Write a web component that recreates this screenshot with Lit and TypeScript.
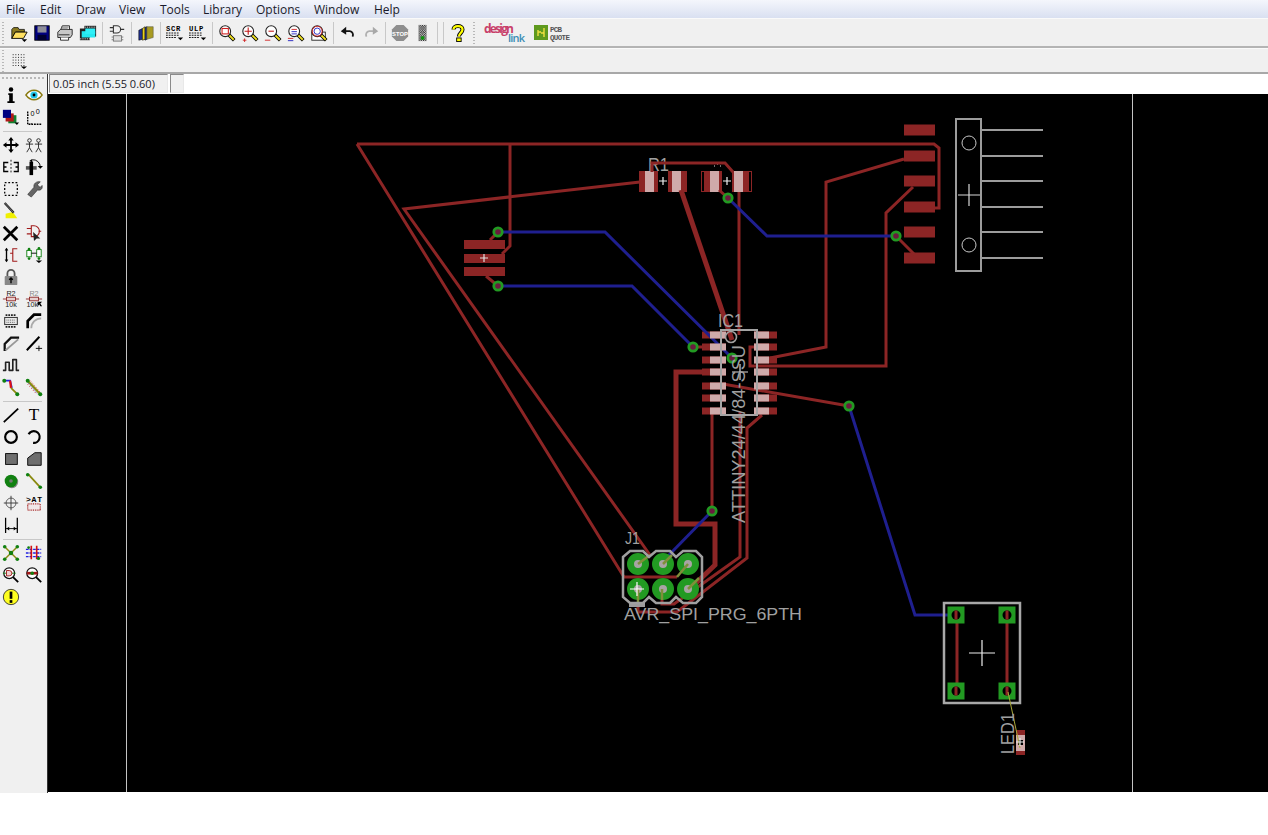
import { html, svg, css, LitElement, TemplateResult } from 'lit';
import { customElement } from 'lit/decorators.js';

const RED = '#8c2525';
const BLUE = '#1f1f8f';
const GREEN = '#229a22';
const GREY = '#a0a0a0';
const LEAD = '#cfaaaa';

const MENUS = ['File', 'Edit', 'Draw', 'View', 'Tools', 'Library', 'Options', 'Window', 'Help'];

function ico(content: unknown): TemplateResult {
  return html`<svg class="ico" viewBox="0 0 20 20" width="18" height="18">${content}</svg>`;
}

function glass(inner: unknown = svg``) {
  return svg`
    <line x1="12" y1="12" x2="18" y2="18" stroke="#000" stroke-width="4"/>
    <line x1="12.5" y1="12.5" x2="17.5" y2="17.5" stroke="#f0e020" stroke-width="2"/>
    <circle cx="8" cy="8" r="6" fill="#fff" stroke="#222" stroke-width="1.2"/>
    ${inner}`;
}

function scriptIcon(label: string) {
  return svg`
    <text x="0" y="8" font-family="Liberation Mono" font-size="8" font-weight="700" fill="#000" textLength="16">${label}</text>
    <path d="M0 10h15M0 12.500h15M0 15h11" stroke="#000" stroke-dasharray="2 1" fill="none"/>
    <path d="M13 15h6l-3 3z" fill="#000"/>`;
}

function nameIcon(fill: string, arrow: boolean) {
  return svg`
    <text x="10" y="7" text-anchor="middle" font-family="Liberation Sans" font-size="8" fill=${fill}>R2</text>
    <path d="M1 10h4M15 10h4" stroke=${RED}/><rect x="5" y="8" width="10" height="4" fill="#e8d0d0" stroke=${RED}/>
    <text x="${arrow ? 8 : 10}" y="18.500" text-anchor="middle" font-family="Liberation Sans" font-size="8" fill="#222">10k</text>
    ${arrow ? svg`<path d="M14 13l5 0-2 2 2 3-2 0-1-2-2 2z" fill="#000"/>` : ''}`;
}

const ICONS: Record<string, TemplateResult> = {
  open: ico(svg`<path d="M2 6l2-2h5l1 2h6v3H6l-4 7z" fill="#8a7a20" stroke="#000" stroke-width=".8"/><path d="M2 16l4-7h13l-4 7z" fill="#ffe060" stroke="#000"/><path d="M13 17h6l-3 3z" fill="#000"/>`),
  save: ico(svg`<rect x="2" y="2" width="16" height="16" fill="#000080" stroke="#000"/><rect x="5" y="2.500" width="10" height="7" fill="#8e8e98"/><rect x="5" y="12" width="10" height="6" fill="#000030"/>`),
  print: ico(svg`<path d="M5 7l2-5h8v5z" fill="#fff" stroke="#222"/><path d="M2 9l3-3h13v6l-2 3H2z" fill="#c8c8c8" stroke="#222"/><path d="M3 12h12M5 15v3h9v-3" stroke="#222" fill="#fff"/><path d="M6 3.500h8M6 5.500h7" stroke="#666"/>`),
  film: ico(svg`<rect x="1" y="5" width="11" height="13" fill="#222"/><rect x="6" y="2" width="13" height="12" fill="#222"/><rect x="3" y="8" width="15" height="7" fill="#24e8f0"/><rect x="7" y="5" width="11" height="6" fill="#30f0f8"/><path d="M1 16.500h11M7 3.500h11" stroke="#fff" stroke-dasharray="1 1"/>`),
  gates: ico(svg`<path d="M6 2h4a4 4 0 0 1 0 8H6zM2 4h4M2 8h4M14 6h4" fill="none" stroke="#333" stroke-width="1.200"/><rect x="6" y="13" width="9" height="6" fill="#ddd" stroke="#777"/><path d="M4 14.500h2M4 17.500h2M15 14.500h2M15 17.500h2" stroke="#777"/>`),
  books: ico(svg`<path d="M2 7l4-2v12l-4 1z" fill="#203090" stroke="#000" stroke-width=".6"/><path d="M6 5l3-2v14l-3 1z" fill="#e8d020" stroke="#000" stroke-width=".6"/><path d="M9 4l2-1v14l-2 1z" fill="#203090" stroke="#000" stroke-width=".6"/><path d="M11 3l7 0v12l-7 2z" fill="#a89a20" stroke="#554" stroke-width=".6"/>`),
  scr: ico(scriptIcon('SCR')),
  ulp: ico(scriptIcon('ULP')),
  zfit: ico(glass(svg`<rect x="4.500" y="5" width="7" height="6" fill="none" stroke="#d02020" stroke-width="1.200"/>`)),
  zin: ico(glass(svg`<path d="M4 8h8M8 4v8" stroke="#c01818" stroke-width="1.200"/><path d="M2 18h4M4 16v4" stroke="#d02020"/>`)),
  zout: ico(glass(svg`<path d="M5 8h6" stroke="#c01818" stroke-width="1.200"/><path d="M1 18h6" stroke="#d02020"/>`)),
  zsel: ico(glass(svg`<path d="M5 6h6" stroke="#d02020"/><path d="M5 8.500h6M5 11h6" stroke="#2020c0"/><path d="M1 16h6" stroke="#d02020"/><path d="M1 18.500h6" stroke="#2020c0"/>`)),
  zarea: ico(svg`<rect x="2" y="9" width="15" height="9" fill="#fff" stroke="#222"/>${glass(svg`<circle cx="8" cy="8" r="3.500" fill="none" stroke="#2020c0"/><circle cx="8" cy="8" r="5.500" fill="none" stroke="#d02020"/>`)}`),
  undo: ico(svg`<path d="M4 8h8a4 4 0 0 1 3 6" fill="none" stroke="#111" stroke-width="2"/><path d="M8 3v9L2 8z" fill="#111"/>`),
  redo: ico(svg`<path d="M16 8H8a4 4 0 0 0-3 6" fill="none" stroke="#b0b0b0" stroke-width="2"/><path d="M12 3v9l6-4z" fill="#a8a8a8"/>`),
  stop: ico(svg`<path d="M6 1h8l5 5v8l-5 5H6l-5-5V6z" fill="#8e8e8e"/><text x="10" y="13" text-anchor="middle" font-family="Liberation Sans" font-size="6.500" font-weight="700" fill="#fff">STOP</text>`),
  light: ico(svg`<pattern id="chk" width="2" height="2" patternUnits="userSpaceOnUse"><rect width="2" height="2" fill="#fff"/><rect width="1" height="1" fill="#000"/><rect x="1" y="1" width="1" height="1" fill="#000"/></pattern><rect x="5" y="1" width="9" height="18" fill="url(#chk)"/><circle cx="9.500" cy="4.500" r="2" fill="#777"/><circle cx="9.500" cy="10" r="2" fill="#777"/><circle cx="9.500" cy="15.500" r="2.200" fill="#109010"/>`),
  help: ico(svg`<path d="M5 6c0-5 10-5 10 0 0 4-4 4-4 8" fill="none" stroke="#000" stroke-width="4.500"/><path d="M5 6c0-5 10-5 10 0 0 4-4 4-4 8" fill="none" stroke="#ffff00" stroke-width="2.500"/><rect x="8.500" y="15.500" width="5" height="4" fill="#ffff00" stroke="#000"/>`),
  grid: ico(svg`<path d="M3 3h13M3 6h13M3 9h13M3 12h13M3 15h13" stroke="#000" stroke-dasharray="1 2" fill="none"/><path d="M12 16h7l-3.500 3z" fill="#000"/>`),

  info: ico(svg`<circle cx="10" cy="4" r="2.500" fill="#000"/><path d="M7 8h5v9h2v2H6v-2h2v-7H7z" fill="#000"/>`),
  eye: ico(svg`<path d="M1 10c5-7 13-7 18 0-5 7-13 7-18 0z" fill="#fff" stroke="#8a7a10" stroke-width="1.500"/><circle cx="10" cy="10" r="4" fill="#20c8e8"/><circle cx="10" cy="10" r="1.600" fill="#000"/>`),
  layers: ico(svg`<rect x="7" y="8" width="9" height="9" fill="#108030"/><rect x="4" y="6" width="9" height="9" fill="#b01818"/><rect x="1" y="2" width="9" height="9" fill="#000080"/><path d="M14 16h5l-2.500 3z" fill="#000"/>`),
  mark: ico(svg`<path d="M3 4v14h15" fill="none" stroke="#000" stroke-dasharray="2 1" stroke-width="1.500"/><path d="M3 8h1M7 18v-1" stroke="#000"/><text x="6" y="9" font-family="Liberation Sans" font-size="8" fill="#000">0</text><text x="12" y="7" font-family="Liberation Sans" font-size="8" fill="#000">0</text>`),
  move: ico(svg`<path d="M10 1l3 4h-2v4h4V7l4 3-4 3v-2h-4v4h2l-3 4-3-4h2v-4H5v2l-4-3 4-3v2h4V5H7z" fill="#000"/>`),
  copy: ico(svg`<g fill="none" stroke="#222"><circle cx="5" cy="5" r="2"/><path d="M5 7v6M1 9h8M5 13l-3 5M5 13l3 5"/><circle cx="15" cy="5" r="2"/><path d="M15 7v6M11 9h8M15 13l-3 5M15 13l3 5"/></g>`),
  mirror: ico(svg`<path d="M10 2v16" stroke="#000" stroke-dasharray="2 2"/><path d="M7 5H2v10h5M13 5h5v10h-5M2 10h3M15 10h3" fill="none" stroke="#000" stroke-width="1.500"/>`),
  rotate: ico(svg`<path d="M1 11h12" stroke="#555" stroke-width="4"/><path d="M7 4v15" stroke="#000" stroke-width="4"/><path d="M8 2a8 8 0 0 1 9 8" fill="none" stroke="#000"/><path d="M14 9h6l-3 3z" fill="#000"/><path d="M8 1v4l-3-2z" fill="#000"/>`),
  group: ico(svg`<rect x="3" y="3" width="14" height="14" fill="none" stroke="#000" stroke-width="1.400" stroke-dasharray="2 2"/>`),
  wrench: ico(svg`<path d="M17 2l-3 3 1 2 2 1 2-2c1 4-2 6-5 5l-7 8-4-3 7-8c-1-4 3-7 7-6z" fill="#666" stroke="#222" stroke-width=".6"/>`),
  paint: ico(svg`<path d="M4 13l8-2 5 7H4z" fill="#f0f000"/><path d="M3 1l10 11" stroke="#222" stroke-width="2.500"/><path d="M3 1l10 11" stroke="#888" stroke-width=".8"/>`),
  del: ico(svg`<path d="M2 3l15 15M17 3L2 18" stroke="#000" stroke-width="3"/>`),
  gate: ico(svg`<path d="M7 2h3a6 6 0 0 1 0 12H7z M2 5h5M2 11h5M15 8h3" fill="none" stroke="#a01818" stroke-width="1.200"/><path d="M9 9l1 10 3-3 4 0z" fill="#222"/>`),
  pinswap: ico(svg`<path d="M5 3v14" stroke="#000" stroke-width="1.500"/><path d="M3 5l2-3 2 3M3 15l2 3 2-3z" fill="#000"/><path d="M9 8h3V3h5M12 8v9h5" fill="none" stroke="#a01818" stroke-width="1.200"/>`),
  gateswap: ico(svg`<rect x="2" y="5" width="5" height="7" fill="#fff" stroke="#108010"/><rect x="13" y="4" width="5" height="8" fill="#fff" stroke="#108010"/><path d="M7 8h6" stroke="#000"/><circle cx="4.500" cy="3.500" r="1.500" fill="#108010"/><circle cx="15.500" cy="2.500" r="1.500" fill="#108010"/><circle cx="4.500" cy="14" r="1.500" fill="#108010"/><circle cx="15.500" cy="14" r="1.500" fill="#108010"/><path d="M12 16h7l-3.500 3z" fill="#000"/>`),
  lock: ico(svg`<path d="M6 9V6a4 4 0 0 1 8 0v3" fill="none" stroke="#555" stroke-width="2"/><rect x="3" y="9" width="14" height="10" rx="1" fill="#888"/><path d="M10 11v6M8 13l2-2 2 2" stroke="#000" stroke-width="1.500" fill="none"/>`),
  name: ico(nameIcon('#222', false)),
  value: ico(nameIcon('#888', true)),
  smash: ico(svg`<rect x="3" y="6" width="14" height="8" fill="#e8e8e8" stroke="#222"/><path d="M4 3.500h12M4 16.500h12" stroke="#222" stroke-dasharray="2 1" stroke-width="2"/><path d="M5 9h9M5 11.500h9" stroke="#555" stroke-dasharray="1 1"/>`),
  miter: ico(svg`<path d="M3 18V10l7-7h8" fill="none" stroke="#000" stroke-width="3"/><path d="M7 18c0-6 5-11 11-11" fill="none" stroke="#aaa" stroke-width="2"/>`),
  split: ico(svg`<path d="M3 19v-8l7-7h9" fill="none" stroke="#111" stroke-width="2.500"/><path d="M4 18L18 6" stroke="#999" stroke-width="2"/>`),
  optimize: ico(svg`<path d="M2 18L16 3" stroke="#000" stroke-width="2.200"/><path d="M12 16h7M15.500 13v6" stroke="#000"/>`),
  meander: ico(svg`<path d="M1 16h3V7h4v9h4V4h4v12h3" fill="none" stroke="#222" stroke-width="1.800" stroke-linejoin="round"/>`),
  route: ico(svg`<path d="M3 3h6l2 8" fill="none" stroke="#2020e0" stroke-width="2"/><path d="M9 3l1 8" stroke="#e01010" stroke-width="2.500"/><path d="M10 11l7 7" stroke="#8a8a10" stroke-width="2"/><circle cx="2.500" cy="3" r="2.200" fill="#108010"/><circle cx="17" cy="18" r="2.200" fill="#108010"/>`),
  ripup: ico(svg`<path d="M3 3l14 15" stroke="#8a8a10" stroke-width="2.500"/><path d="M6 3l11 13M3 7l10 11" stroke="#d02020" stroke-dasharray="1 2"/><path d="M4 6l10 12" stroke="#2020c0" stroke-dasharray="1 2"/><circle cx="3" cy="3" r="2.200" fill="#108010"/><circle cx="17" cy="18" r="2.200" fill="#108010"/>`),
  line: ico(svg`<path d="M2 18L18 3" stroke="#000" stroke-width="2"/>`),
  text: ico(svg`<text x="10" y="16" text-anchor="middle" font-family="Liberation Serif" font-size="19" fill="#000">T</text>`),
  circle: ico(svg`<circle cx="10" cy="10" r="6.500" fill="none" stroke="#000" stroke-width="2.400"/>`),
  arc: ico(svg`<path d="M4 7a6.500 6.500 0 1 1 5 9.500" fill="none" stroke="#000" stroke-width="2.400"/>`),
  rect: ico(svg`<rect x="4" y="4" width="13" height="12" fill="#6e6e6e" stroke="#000"/>`),
  poly: ico(svg`<path d="M3 17V9l8-6h7v14z" fill="#6e6e6e" stroke="#000"/>`),
  via: ico(svg`<circle cx="11" cy="11" r="7" fill="#888"/><circle cx="10" cy="10" r="7" fill="#108010"/><circle cx="10" cy="10" r="2" fill="#777"/>`),
  signal: ico(svg`<path d="M4 3l13 14" stroke="#8a8a10" stroke-width="2"/><circle cx="3" cy="3" r="2" fill="#108010"/><circle cx="17" cy="17" r="2" fill="#108010"/>`),
  hole: ico(svg`<circle cx="10" cy="10" r="5.500" fill="none" stroke="#555"/><path d="M10 2v16M2 10h16" stroke="#333"/>`),
  attr: ico(svg`<text x="1" y="9" font-family="Liberation Mono" font-size="9" font-weight="700" fill="#000" textLength="18">&gt;AT</text><rect x="3" y="11" width="14" height="7" fill="#f0e8e8" stroke="#a01818" stroke-dasharray="1 1" stroke-width="1.400"/>`),
  dim: ico(svg`<path d="M4 2v17M17 2v17" stroke="#000" stroke-width="1.400"/><path d="M4 14h13" stroke="#000"/><path d="M5 14l3-2v4zM16 14l-3-2v4z" fill="#000"/>`),
  rats: ico(svg`<path d="M3 3l14 14M17 3L3 17" stroke="#8a8a10" stroke-width="1.600"/><circle cx="10" cy="10" r="2.500" fill="#108010"/><circle cx="3" cy="3" r="2" fill="#108010"/><circle cx="17" cy="3" r="2" fill="#108010"/><circle cx="3" cy="17" r="2" fill="#108010"/><circle cx="17" cy="17" r="2" fill="#108010"/>`),
  auto: ico(svg`<path d="M1 6h17M1 10h17M1 14h17" stroke="#2020e0" stroke-width="1.500" stroke-dasharray="3 1"/><path d="M7 2v15M13 2v15" stroke="#d01010" stroke-width="1.800"/><circle cx="4" cy="4" r="1.500" fill="#108010"/><circle cx="15" cy="16" r="1.800" fill="#108010"/>`),
  show: ico(svg`<path d="M12 12l6 6" stroke="#000" stroke-width="2"/><circle cx="8" cy="8" r="6" fill="#fff" stroke="#111" stroke-width="1.400"/><path d="M1 8h4M11 8h4" stroke="#108010"/><path d="M5 5h3a3 3 0 0 1 0 6H5z" fill="#f0d0d0" stroke="#a01818"/>`),
  info2: ico(svg`<path d="M12 12l6 6" stroke="#000" stroke-width="2"/><circle cx="8" cy="8" r="6" fill="#fff" stroke="#111" stroke-width="1.400"/><path d="M2 8h12" stroke="#a01818" stroke-width="3"/><circle cx="8" cy="8" r="2" fill="#108010"/>`),
  erc: ico(svg`<circle cx="10" cy="10" r="8.500" fill="#ffff20" stroke="#333"/><path d="M10 4v8" stroke="#000" stroke-width="3"/><rect x="8.500" y="13.500" width="3" height="3" fill="#000"/>`),
};

const TOP: string[] = ['open', 'save', 'print', 'film', '|', 'gates', '|', 'books', '|', 'scr', 'ulp', '|',
  'zfit', 'zin', 'zout', 'zsel', 'zarea', '|', 'undo', 'redo', '|', 'stop', 'light', '|', '|', 'help'];

const SIDE: string[] = ['info', 'eye', 'layers', 'mark', '|', 'move', 'copy', 'mirror', 'rotate', 'group', 'wrench',
  'paint', '', 'del', 'gate', 'pinswap', 'gateswap', 'lock', '', 'name', 'value', 'smash', 'miter', 'split', 'optimize',
  'meander', '', 'route', 'ripup', '|', 'line', 'text', 'circle', 'arc', 'rect', 'poly', 'via', 'signal', 'hole', 'attr',
  'dim', '', '|', 'rats', 'auto', 'show', 'info2', 'erc', ''];

// [points, width, colour]
const WIRES: [string, number, string][] = [
  ['357,144 934,144 939,148 939,208 935,208', 3, RED],
  ['357,144 624,577 677,577', 3, RED],
  ['650,555 404,209 640,182', 3, RED],
  ['510,144 510,246 502,254', 3, RED],
  ['498,232 490,240', 3, RED],
  ['498,286 486,276', 3, RED],
  ['723,372 676,372 676,524 715,524 715,565 694,585', 5, RED],
  ['681,190 732,340', 5, RED],
  ['739,192 739,335', 3, RED],
  ['652,172 652,163 725,163 733,172', 3, RED],
  ['728,198 719,190', 3, RED],
  ['770,358 826,347 826,182 904,159', 3, RED],
  ['756,347 750,347 750,366 886,366 886,213 913,187', 3, RED],
  ['849,406 723,384', 3, RED],
  ['896,236 915,255', 3, RED],
  ['693,347 705,347', 3, RED],
  ['712,411 712,511', 3, RED],
  ['762,415 747,428 747,558 677,612 638,612 638,602', 3, RED],
  ['740,412 740,557 674,604 662,604 662,600', 3, RED],
  ['957,615 957,691', 3, RED],
  ['1007,615 1007,691', 3, RED],
  ['498,232 605,232 732,358', 3, BLUE],
  ['498,286 632,286 693,347', 3, BLUE],
  ['728,198 767,236 896,236', 3, BLUE],
  ['849,406 915,615 955,615', 3, BLUE],
  ['712,511 668,556', 3, BLUE],
];

// wires that show through the header's pads, where copper and pad mix
const PAD_STUBS = ['638,564 650,555', '663,564 672,555', '688,564 677,577', '688,589 699,578', '638,589 638,602', '662,589 662,600'];

const VIAS = [[498, 232], [498, 286], [728, 198], [896, 236], [693, 347], [732, 358], [849, 406], [712, 511]];
const HEADER_PADS = [[638, 564], [663, 564], [688, 564], [638, 589], [663, 589], [688, 589]];
const IC_ROWS = [335, 347, 360, 372, 386, 398, 411];
const CONN_ROWS = [130, 156, 181, 207, 232, 258];
const LED_PADS = [[956, 615], [1007, 615], [956, 691], [1007, 691]];

function cross(x: number, y: number, r: number, color = '#e8e8e8') {
  return svg`<path d="M${x - r} ${y}h${r * 2}M${x} ${y - r}v${r * 2}" stroke=${color} stroke-width="1.200" fill="none"/>`;
}

function label(text: string, x: number, y: number, size: number, len: number, rotate = false) {
  return svg`<text x=${x} y=${y} font-family="Liberation Sans" font-size=${size} fill=${GREY}
    textLength=${len} lengthAdjust="spacingAndGlyphs"
    transform=${rotate ? `rotate(-90 ${x} ${y})` : ''}>${text}</text>`;
}

// a chip resistor: copper ends, tinned leads, black gap in the middle
function chip(x: number, w: number, cx: number) {
  return svg`
    <rect x=${x} y="171" width=${w} height="21" fill=${RED}/>
    <rect x=${x + 6} y="171" width="9" height="21" fill=${LEAD}/>
    <rect x=${x + w - 15} y="171" width="9" height="21" fill=${LEAD}/>
    <rect x=${cx - 5} y="171" width="10" height="21" fill="#000"/>
    ${cross(cx, 181, 4, '#f0f0f0')}`;
}

@customElement('app-root')
export class AppRoot extends LitElement {
  static styles = css`
    :host {
      display: block;
      width: 1268px;
      height: 835px;
      background: #fff;
      overflow: hidden;
      font-family: 'Open Sans', 'Noto Sans', sans-serif;
      color: #1a1a2a;
    }

    .menubar {
      display: flex;
      height: 18px;
      padding-left: 6px;
      align-items: center;
      font-size: 12px;
      background: linear-gradient(#f4f6fc, #d9e0f1);
    }

    .bar {
      display: flex;
      align-items: center;
      background: #f0f0f0;
      box-sizing: border-box;
      border-top: 1px solid #fafafa;
    }
    .bar.one { height: 30px; border-bottom: 2px solid #b4b4b4; }
    .bar.two { height: 26px; border-bottom: 2px solid #a8a8a8; }

    .grip {
      width: 7px;
      height: 22px;
      flex: none;
      background: repeating-linear-gradient(#b8b8b8 0 1px, transparent 1px 3px) 2px 0 / 2px 100% no-repeat;
    }

    .cell {
      width: 23px;
      height: 22px;
      flex: none;
      display: flex;
      align-items: center;
      justify-content: center;
    }
    .ico { display: block; overflow: visible; }

    .sep { width: 6px; height: 22px; flex: none; display: flex; justify-content: center; }
    .sep::after { content: ''; width: 1px; background: #c8c8c8; }

    .logos { display: flex; align-items: center; height: 22px; }
    .logos .grip { margin-left: 2px; }
    .design { width: 44px; height: 24px; margin-left: 6px; overflow: visible; }
    .quote { width: 38px; height: 20px; margin-left: 6px; overflow: visible; }

    .main { display: flex; height: 719px; }

    .side {
      width: 47px;
      flex: none;
      background: #f0f0f0;
      border-right: 1px solid #333;
    }
    .side-grip {
      height: 10px;
      background: repeating-linear-gradient(90deg, #b8b8b8 0 2px, transparent 2px 4px) 2px 3px / 43px 2px no-repeat;
    }
    .tools { display: grid; grid-template-columns: 23px 23px; margin-left: -1px; }
    .rule { grid-column: 1 / 3; height: 6px; display: flex; align-items: center; padding: 0 3px 0 4px; }
    .rule::after { content: ''; height: 1px; flex: 1; background: #c8c8c8; }

    .work { flex: 1; display: flex; flex-direction: column; min-width: 0; }

    .status { height: 20px; display: flex; background: #fff; }
    .field {
      box-sizing: border-box;
      height: 19px;
      margin: 0 1px;
      border: 1px solid;
      border-color: #8a8a8a #e8e8e8 #e8e8e8 #8a8a8a;
      background: #f0f0f0;
      font-size: 11px;
      line-height: 17px;
      white-space: nowrap;
      padding-left: 3px;
    }
    .field.coords { width: 119px; }
    .field.blank { width: 14px; padding: 0; }

    .board { display: block; background: #000; }
  `;

  private _renderBoard() {
    return html`
      <svg class="board" width="1220" height="698" viewBox="48 94 1220 698">
        <path d="M126.500 94v698M1132.500 94v698" stroke="#c4c4c4" stroke-width="1"/>

        ${CONN_ROWS.map((y) => svg`<rect x="904" y=${y - 5.5} width="31" height="11" fill=${RED}/>`)}
        <rect x="464" y="240" width="41" height="9" fill=${RED}/>
        <rect x="464" y="254" width="41" height="9" fill=${RED}/>
        <rect x="464" y="267" width="41" height="9" fill=${RED}/>
        ${cross(484, 258, 4, '#e0e0e0')}

        ${chip(639, 48, 663)}
        ${label('R1', 648, 171, 19, 21)}
        <rect x="701.500" y="171.500" width="50" height="20" fill="none" stroke=${RED}/>
        ${chip(704, 45, 727)}
        <path d="M714 166h1M717 164h1M720 166h1" stroke="#ddd"/>

        ${IC_ROWS.map((y) => svg`
          <rect x="702" y=${y - 3.5} width="24" height="7" fill=${RED}/>
          <rect x="754" y=${y - 3.5} width="23" height="7" fill=${RED}/>`)}
        ${WIRES.map(([pts, w, c]) => svg`<polyline points=${pts} fill="none" stroke=${c} stroke-width=${w}/>`)}
        ${IC_ROWS.map((y) => svg`
          <rect x="710" y=${y - 3.5} width="16" height="7" fill=${LEAD}/>
          <rect x="754" y=${y - 3.5} width="15" height="7" fill=${LEAD}/>`)}

        ${VIAS.map(([x, y]) => svg`
          <circle cx=${x} cy=${y} r="4.200" fill="#6a1c3e" stroke=${GREEN} stroke-width="2.800"/>`)}

        <rect x="721" y="330" width="36" height="85" fill="none" stroke="#a4a4a4" stroke-width="2"/>
        <circle cx="731" cy="337" r="5.500" fill="none" stroke=${GREY} stroke-width="1.600"/>
        ${cross(740, 372, 8, '#d8d8d8')}
        ${label('IC1', 718, 327, 18, 25)}
        ${label('ATTINY24/44/84-SSU', 745, 523, 18, 178, true)}

        <rect x="956" y="119" width="25" height="152" fill="none" stroke="#9c9c9c" stroke-width="2"/>
        <circle cx="969" cy="143" r="7" fill="none" stroke="#c8c8c8"/>
        <circle cx="969" cy="245" r="7" fill="none" stroke="#c8c8c8"/>
        ${cross(969, 195, 11, '#d8d8d8')}
        ${CONN_ROWS.map((y) => svg`<path d="M982 ${y}h61" stroke="#9c9c9c" stroke-width="2"/>`)}

        ${HEADER_PADS.map(([x, y]) => svg`
          <circle cx=${x} cy=${y} r="7.500" fill="#a8a4a4" stroke=${GREEN} stroke-width="7"/>`)}
        ${PAD_STUBS.map((pts) => svg`<polyline points=${pts} fill="none" stroke="#7f8f3a" stroke-width="2.500"/>`)}
        <rect x="629" y="602" width="16" height="5" fill="#9c9c9c"/>
        <polygon points="623,557 630,551 643,551 649,557 656,551 670,551 676,557 683,551 696,551 702,557 702,597 696,603 683,603 676,597 670,603 656,603 649,597 643,603 630,603 623,597"
          fill="none" stroke="#a0a0a0" stroke-width="2.500"/>
        ${cross(637, 589, 7, '#fff')}
        ${label('J1', 625, 544, 17, 15)}
        ${label('AVR_SPI_PRG_6PTH', 624, 620, 17, 178)}

        <rect x="944" y="603" width="76" height="100" fill="none" stroke="#a8a8a8" stroke-width="2.500"/>
        ${LED_PADS.map(([x, y]) => svg`
          <rect x=${x - 8.5} y=${y - 8.5} width="17" height="17" fill=${GREEN}/>
          <circle cx=${x} cy=${y} r="4.500" fill="#000"/>
          <rect x=${x - 1.5} y=${y - 4.5} width="3" height="9" fill=${RED}/>`)}
        ${cross(982, 653, 13, '#eee')}

        <rect x="1016" y="730" width="9" height="25" fill=${RED}/>
        <rect x="1016" y="735" width="9" height="16" fill=${LEAD}/>
        <rect x="1018" y="740" width="5" height="5" fill="#000"/>
        <path d="M1008 692L1020 748" stroke="#a8a838" stroke-width="1"/>
        ${cross(1020, 742, 4, '#e8e8e8')}
        ${label('LED1', 1014, 754, 18, 41, true)}
      </svg>
    `;
  }

  render() {
    const menuWidths = [34, 36, 43, 41, 43, 53, 58, 60, 40];

    return html`
      <div class="menubar">
        ${MENUS.map((m, i) => html`<span style="width:${menuWidths[i]}px">${m}</span>`)}
      </div>

      <div class="bar one">
        <div class="grip"></div>
        ${TOP.map((k) => (k === '|' ? html`<div class="sep"></div>` : html`<div class="cell">${ICONS[k]}</div>`))}
        <div class="logos">
          <div class="grip"></div>
          <svg class="design" viewBox="0 0 44 24">
            <text x="0" y="12" font-family="Open Sans" font-size="12" font-weight="700" fill="#c8406a" textLength="30">design</text>
            <text x="24" y="21" font-family="Open Sans" font-size="11" font-weight="600" fill="#3a8cb4" textLength="17">link</text>
          </svg>
          <svg class="quote" viewBox="0 0 38 20">
            <rect x="0" y="2" width="14" height="15" fill="#5f9a1e"/>
            <path d="M4 13V7M10 14V5M4 9h3M10 10H7" stroke="#f0e040" stroke-width="1.400" fill="none"/>
            <text x="16" y="9" font-family="Liberation Mono" font-size="7.500" font-weight="700" fill="#555" textLength="12">PCB</text>
            <text x="16" y="17" font-family="Liberation Mono" font-size="7.500" font-weight="700" fill="#555" textLength="20">QUOTE</text>
          </svg>
        </div>
      </div>

      <div class="bar two">
        <div class="grip"></div>
        <div class="cell">${ICONS.grid}</div>
      </div>

      <div class="main">
        <div class="side">
          <div class="side-grip"></div>
          <div class="tools">
            ${SIDE.map((k) =>
              k === '|'
                ? html`<div class="rule"></div>`
                : html`<div class="cell">${k ? ICONS[k] : ''}</div>`,
            )}
          </div>
        </div>
        <div class="work">
          <div class="status">
            <div class="field coords">0.05 inch (5.55 0.60)</div>
            <div class="field blank"></div>
          </div>
          ${this._renderBoard()}
        </div>
      </div>
    `;
  }
}
